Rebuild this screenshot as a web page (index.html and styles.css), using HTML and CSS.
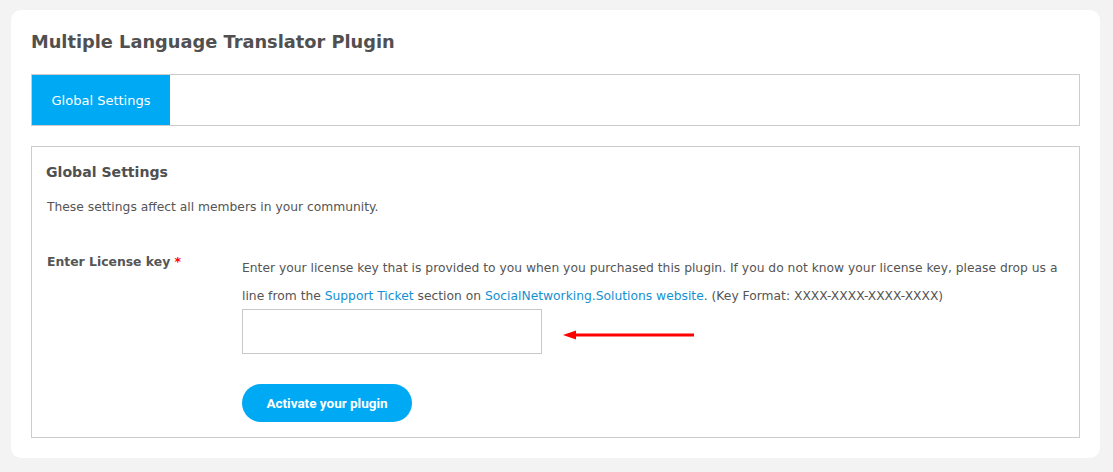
FILE: index.html
```html
<!DOCTYPE html>
<html>
<head>
<meta charset="utf-8">
<link rel="stylesheet" href="styles.css">
</head>
<body>
<div class="card">
  <h1 class="title">Multiple Language Translator Plugin</h1>
  <div class="tabs">
    <div class="tab active">Global Settings</div>
  </div>
  <div class="settings">
    <h2 class="settings-title">Global Settings</h2>
    <p class="settings-desc">These settings affect all members in your community.</p>
    <div class="field">
      <div class="field-label">Enter License key <span class="req">*</span></div>
      <div class="field-body">
        <p class="field-help">Enter your license key that is provided to you when you purchased this plugin. If you do not know your license key, please drop us a line from the <a href="#">Support Ticket</a> section on <a href="#">SocialNetworking.Solutions website</a>. (Key Format: XXXX-XXXX-XXXX-XXXX)</p>
        <div class="input-row">
          <input class="key-input" type="text">
          <svg class="arrow" width="134" height="12" viewBox="0 0 134 12">
            <path d="M0 6 L13 1.5 L13 10.5 Z" fill="#ff0000"/>
            <rect x="10" y="4.5" width="121" height="3" fill="#ff0000"/>
          </svg>
        </div>
        <button class="activate">Activate your plugin</button>
      </div>
    </div>
  </div>
</div>
</body>
</html>
```

FILE: styles.css
```css
html, body {
  margin: 0;
  padding: 0;
}
body {
  background: #f3f3f3;
  font-family: "DejaVu Sans", Verdana, sans-serif;
  color: #555555;
  padding: 10px 13px 15px 11px;
}
.card {
  background: #ffffff;
  border-radius: 10px;
  padding: 20px 20px 20px 20px;
}
.title {
  margin: 0 0 20px 0;
  font-size: 17.8px;
  line-height: 24px;
  font-weight: bold;
  color: #505050;
}
.tabs {
  border: 1px solid #cccccc;
  height: 50px;
  display: flex;
  margin-bottom: 20px;
}
.tab {
  display: flex;
  align-items: center;
  font-size: 13px;
}
.tab.active {
  background: #00a9f4;
  color: #ffffff;
  width: 138px;
  justify-content: center;
}
.settings {
  border: 1px solid #cccccc;
  padding: 14px 15px 15px 14px;
  height: 292px;
  box-sizing: border-box;
}
.settings-title {
  margin: 0;
  font-size: 14.1px;
  line-height: 22px;
  font-weight: bold;
  color: #505050;
}
.settings-desc {
  margin: 16px 0 0 1px;
  font-size: 12.3px;
  line-height: 16px;
}
.field {
  display: flex;
  margin-top: 46px;
}
.field-label {
  width: 195px;
  flex-shrink: 0;
  padding-left: 1px;
  font-size: 12.4px;
  font-weight: bold;
  line-height: 18px;
  margin-top: -8px;
}
.req {
  color: #ff0000;
}
.field-body {
  flex: 1;
}
.field-help {
  margin: -7px 0 0 0;
  font-size: 12.3px;
  line-height: 28px;
}
.field-help a {
  color: #1591d2;
  text-decoration: none;
}
.input-row {
  display: flex;
  align-items: center;
  margin-top: -1px;
}
.key-input {
  width: 300px;
  height: 45px;
  box-sizing: border-box;
  border: 1px solid #c8c8c8;
  border-radius: 0;
  margin: 0;
  outline: none;
}
.arrow {
  margin-left: 21px;
  margin-top: 6px;
}
.activate {
  margin-top: 30px;
  display: block;
  width: 170px;
  height: 38px;
  border: none;
  border-radius: 19px;
  background: #00a9f4;
  color: #ffffff;
  font-family: Roboto, "Liberation Sans", sans-serif;
  font-weight: bold;
  font-size: 13.5px;
  padding: 0;
}
```
